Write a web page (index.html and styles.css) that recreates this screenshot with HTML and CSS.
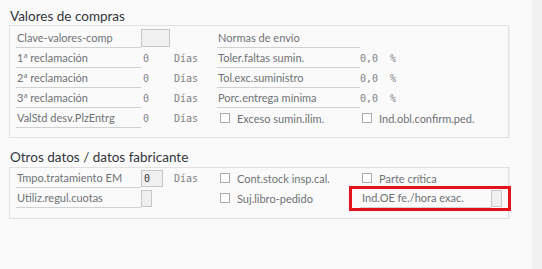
FILE: index.html
```html
<!DOCTYPE html>
<html lang="es">
  <head>
    <meta charset="UTF-8" />
    <meta name="viewport" content="width=device-width, initial-scale=1.0" />
    <title>Valores de compras</title>
    <link rel="stylesheet" href="styles.css">
  </head>
  <body>
    <div class="screen">
      <main class="main">
        <h2 class="group-title">Valores de compras</h2>
        <section class="group">
          <div class="row">
            <span class="label">Clave-valores-comp</span>
            <span class="cell"><span class="input input-wide"></span></span>
            <span class="cell"></span>
            <span class="label">Normas de envío</span>
            <span class="cell"></span>
          </div>
          <div class="row">
            <span class="label">1ª reclamación</span>
            <span class="value">0</span>
            <span class="value unit">Días</span>
            <span class="label">Toler.faltas sumin.</span>
            <span class="value">0,0&nbsp;&nbsp;%</span>
          </div>
          <div class="row">
            <span class="label">2ª reclamación</span>
            <span class="value">0</span>
            <span class="value unit">Días</span>
            <span class="label">Tol.exc.suministro</span>
            <span class="value">0,0&nbsp;&nbsp;%</span>
          </div>
          <div class="row">
            <span class="label">3ª reclamación</span>
            <span class="value">0</span>
            <span class="value unit">Días</span>
            <span class="label">Porc.entrega mínima</span>
            <span class="value">0,0&nbsp;&nbsp;%</span>
          </div>
          <div class="row">
            <span class="label">ValStd desv.PlzEntrg</span>
            <span class="value">0</span>
            <span class="value unit">Días</span>
            <label class="check"><span class="box"></span>Exceso sumin.ilim.</label>
            <label class="check check-right"><span class="box"></span>Ind.obl.confirm.ped.</label>
          </div>
        </section>

        <h2 class="group-title group-title-second">Otros datos / datos fabricante</h2>
        <section class="group group-second">
          <div class="row">
            <span class="label">Tmpo.tratamiento EM</span>
            <span class="cell"><span class="input input-num">0</span></span>
            <span class="value unit">Días</span>
            <label class="check"><span class="box"></span>Cont.stock insp.cal.</label>
            <label class="check check-right"><span class="box"></span>Parte crítica</label>
          </div>
          <div class="row">
            <span class="label">Utiliz.regul.cuotas</span>
            <span class="cell"><span class="input input-flag"></span></span>
            <span class="cell"></span>
            <label class="check"><span class="box"></span>Suj.libro-pedido</label>
            <span class="highlight">
              <span class="label label-inline">Ind.OE fe./hora exac.</span>
              <span class="input input-flag"></span>
            </span>
          </div>
        </section>
      </main>
      <div class="rail"></div>
    </div>
  </body>
</html>
```

FILE: styles.css
```css
*,
*::before,
*::after {
  box-sizing: border-box;
  margin: 0;
  padding: 0;
}

html,
body {
  height: 100%;
}

body {
  background-color: #fafafa;
  color: #6f7275;
  font-family: Lato, "Liberation Sans", sans-serif;
  font-size: 11px;
}

.screen {
  display: flex;
  height: 100%;
}

.main {
  flex: 1;
  padding: 8px 0 0 9px;
}

.rail {
  width: 10px;
  background-color: #f1f1f1;
}

.group-title {
  color: #32363a;
  font-size: 13.5px;
  font-weight: normal;
  line-height: 16px;
  height: 17px;
  padding-left: 1px;
}

.group-title-second {
  margin-top: 11px;
  height: 18px;
}

.group {
  width: 500px;
  border: 1px solid #e1e1e1;
  box-shadow: 1px 0 0 #efefef;
  padding: 2px 0 9px 6px;
}

.group-second {
  padding-top: 0;
  padding-bottom: 10px;
}

.row {
  display: grid;
  grid-template-columns: 125px 31px 45px 143px 1fr;
  height: 20px;
  align-items: center;
}

.label {
  height: 20px;
  line-height: 20px;
  border-bottom: 1px solid #cfd1d3;
  padding-left: 1px;
  white-space: nowrap;
  overflow: hidden;
}

.cell {
  height: 20px;
  display: flex;
  align-items: center;
}

.value {
  font-family: "DejaVu Sans Mono", monospace;
  font-size: 10px;
  color: #808386;
  padding-left: 2px;
  white-space: nowrap;
}

.row .value:last-child {
  padding-left: 0;
}

.input {
  display: block;
  height: 18px;
  background-color: #f0f0f0;
  border: 1px solid #c6c6c6;
}

.input-wide {
  width: 29px;
}

.input-num {
  width: 22px;
  height: 17px;
  font-family: "DejaVu Sans Mono", monospace;
  font-size: 10px;
  line-height: 15px;
  padding-left: 2px;
  color: #32363a;
  margin-top: 1px;
}

.input-flag {
  width: 11px;
  height: 17px;
  margin-top: 1px;
}

.check {
  display: flex;
  align-items: center;
  gap: 7px;
  padding-left: 3px;
  white-space: nowrap;
}

.check-right {
  padding-left: 2px;
}

.box {
  width: 10px;
  height: 10px;
  border: 1px solid #a9abad;
  background-color: #fff;
}

.highlight {
  position: relative;
  display: flex;
  align-items: center;
  width: 142px;
  height: 20px;
}

.highlight::after {
  content: "";
  position: absolute;
  left: -11px;
  right: -9px;
  top: -2px;
  bottom: -3px;
  border: 3px solid #e3131b;
}

.label-inline {
  width: 131px;
  padding-left: 2px;
}
```
